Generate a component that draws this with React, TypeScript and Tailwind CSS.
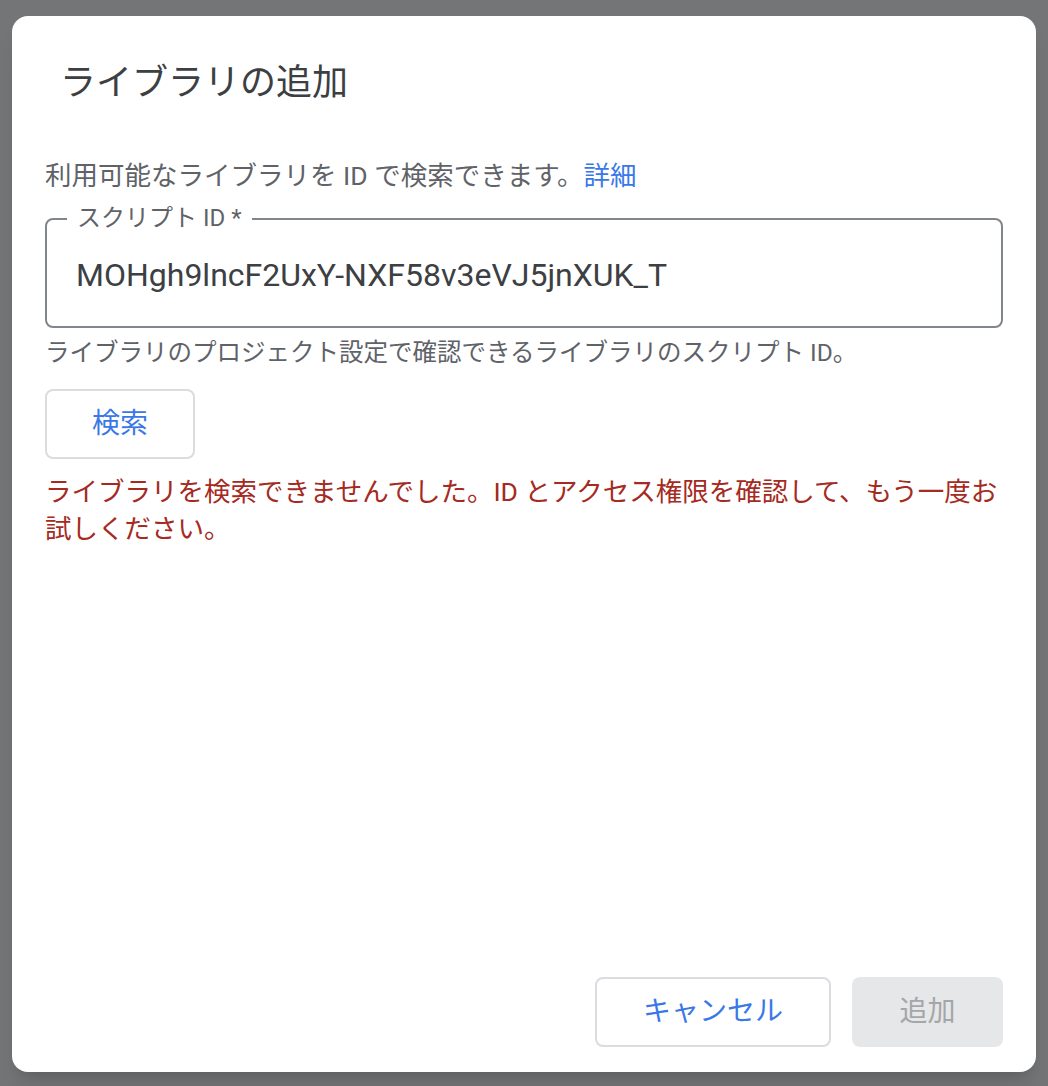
import * as React from 'react';

const font = { fontFamily: 'Roboto, "Noto Sans CJK JP", sans-serif' };

export default function App() {
  return (
    <div className="w-full h-[1086px] bg-[#747577] pt-4 px-3 pb-[14px]" style={font}>
      <div className="h-full bg-white rounded-2xl shadow-xl flex flex-col">
        {/* Title */}
        <h1 className="pl-[48px] pt-[44px] text-[36px] leading-[46px] text-[#3c4043] font-normal">
          ライブラリの追加
        </h1>

        {/* Body */}
        <div className="px-[33px] pt-[52px] flex flex-col">
          <p className="text-[26.5px] leading-[36px] text-[#5f6368]">
            利用可能なライブラリを ID で検索できます。<a href="#" className="text-[#3b78e7]">詳細</a>
          </p>

          <div className="relative mt-6 h-[110px] border-2 border-[#80868b] rounded-lg flex items-center pl-[29px]">
            <span className="absolute -top-[17px] left-[20px] bg-white px-[10px] text-[24px] leading-[30px] text-[#5f6368]">
              スクリプト ID *
            </span>
            <span className="text-[32px] text-[#3c4043] mt-[4px]">MOHgh9lncF2UxY-NXF58v3eVJ5jnXUK_T</span>
          </div>

          <p className="mt-[9px] text-[24.5px] leading-[32px] text-[#5f6368]">
            ライブラリのプロジェクト設定で確認できるライブラリのスクリプト ID。
          </p>

          <div className="mt-5">
            <button className="w-[150px] h-[70px] border-2 border-[#dadce0] rounded-lg text-[28px] text-[#3b78e7] bg-white">
              検索
            </button>
          </div>

          <p className="mt-[14px] text-[26.5px] leading-[37px] text-[#a52a22]">
            ライブラリを検索できませんでした。ID とアクセス権限を確認して、もう一度お試しください。
          </p>
        </div>

        {/* Footer */}
        <div className="mt-auto flex justify-end gap-[21px] px-[33px] pb-[25px]">
          <button className="w-[236px] h-[70px] border-2 border-[#dadce0] rounded-lg text-[28px] text-[#3b78e7] bg-white">
            キャンセル
          </button>
          <button className="w-[151px] h-[70px] rounded-lg text-[28px] text-[#a4a6a8] bg-[#e6e7e8]" disabled>
            追加
          </button>
        </div>
      </div>
    </div>
  );
}
